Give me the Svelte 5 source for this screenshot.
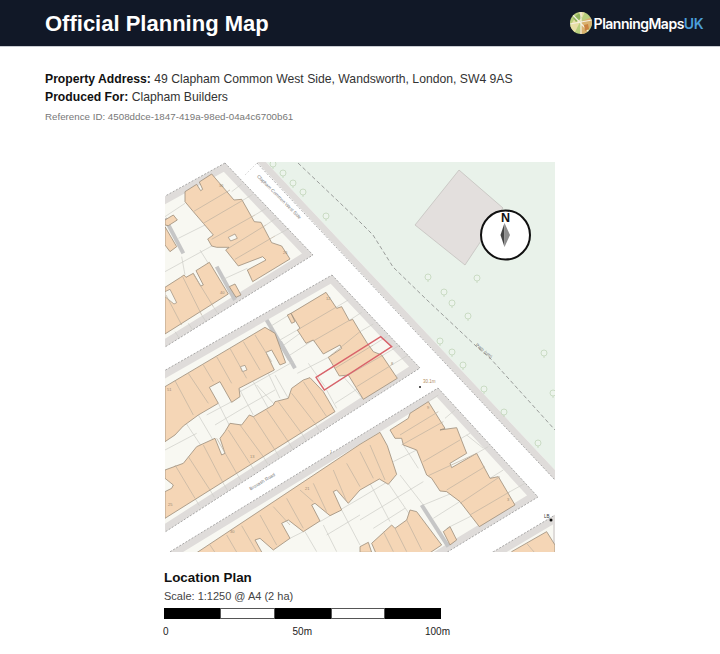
<script>
    // map pieces are traced per crop: each group has its own origin, coordinates at 3x
    const blocks = [
        '225,163 313,255 120,375 120,221',
        '332,275 420,368 120,561 120,396',
        '438,388 538,497 398,582 150,582 150,564',
        '493,552 560,512 560,560 480,560'
    ];

    const groups = [
        {
            x: 160, y: 160,
            alleys: ['15,175 70,280', '170,320 225,420', '320,480 390,600'],
            plots: [
                '215,95 245,72', '250,120 278,103', '285,165 318,145', '318,195 348,175', '345,228 388,205',
                '55,235 135,195', '15,170 75,130', '15,335 170,250', '65,290 75,345', '120,270 145,310',
                '185,360 262,325', '330,500 395,460', '365,560 420,520', '175,600 320,505',
                '125,465 138,485', '160,440 172,458', '85,490 98,510', '45,515 58,535'
            ],
            houses: [
                '75,95 110,73 122,92 128,88 118,66 155,42 222,120 245,118 283,185 303,187 335,248 365,258 390,297 278,365 262,330 318,300 308,290 235,318 197,270 207,262 170,262 155,258 143,237 160,225 130,190 100,155 75,125',
                '15,180 40,165 52,180 25,197 15,195',
                '15,200 50,260 30,275 15,255',
                '15,382 62,352 72,345 78,352 100,340 122,378 130,375 108,332 148,307 205,402 15,522',
                '208,380 225,372 243,405 228,412'
            ],
            holes: ['205,232 225,222 232,235 212,243', '15,395 30,388 50,428 42,432 15,410'],
            walls: [
                '100,155 210,90', '130,190 250,120', '155,238 285,165', '200,268 318,195', '225,298 345,228',
                '68,350 125,465', '100,342 160,440', '18,405 65,495'
            ]
        },
        {
            x: 280, y: 280,
            alleys: ['0,185 45,265'],
            plots: [
                '168,82 205,60', '210,120 245,97', '240,155 280,132', '280,195 320,170', '310,225 360,195',
                '335,255 385,225', '0,180 52,150', '30,225 100,180', '52,280 145,232', '108,292 205,232',
                '135,330 205,285', '165,370 235,325', '85,250 135,320', '140,330 170,385', '190,290 250,358'
            ],
            houses: [
                '33,100 138,37 170,85 185,80 208,122 218,118 240,155 262,190 280,215 305,225 352,295 250,358 205,285 178,288 145,232 185,205 180,195 130,222 100,180 78,190 52,150 60,145',
                '22,105 33,100 45,125 35,130'
            ],
            holes: [],
            walls: ['55,148 168,82', '100,183 210,120', '145,232 240,155', '165,265 280,195', '205,285 310,225', '230,320 335,255']
        },
        {
            x: 165, y: 340,
            alleys: [],
            plots: ['0,260 60,245', '60,245 110,320', '100,225 150,310', '125,225 200,185', '160,190 200,270', '222,145 265,225', '265,125 310,205', '310,100 345,175', '150,255 225,210', '225,210 330,150'],
            houses: [
                '0,140 300,-38 330,-20 362,68 345,75 320,30 303,37 328,90 222,145 225,170 200,187 165,125 133,142 160,190 100,225 55,258 30,285 0,305'
            ],
            holes: ['226,80 240,76 246,90 232,95'],
            walls: ['30,122 85,225', '70,100 130,190', '115,75 145,125', '155,50 200,130', '195,25 245,115', '235,5 285,90', '270,-15 320,65']
        },
        {
            x: 160, y: 355,
            alleys: [],
            plots: [
                '15,285 110,235', '240,110 400,20', '290,90 345,150', '345,60 385,130',
                '105,430 118,452', '150,405 163,427', '190,385 203,407', '230,355 243,377', '270,325 283,347',
                '310,305 323,327', '345,285 358,307', '385,260 398,282', '425,235 438,257', '465,205 478,227',
                '480,500 600,430', '500,540 600,480', '435,530 470,590', '490,510 530,590', '545,465 600,570', '390,550 430,530'
            ],
            houses: [
                '430,75 450,68 490,110 525,170 15,490 15,410 35,400 40,390 15,370 15,345 70,325 110,275 165,250 185,300 195,295 180,250 195,230 210,205 245,210 268,180 280,185 340,150 345,140 385,130 395,100',
                // runs on past this crop to the corner of the terrace
                '100,600 600,268 660,232 682,272 710,358 685,388 658,372 600,405 565,445 530,405 520,410 545,465 510,482 465,445 455,450 480,498 430,530 385,495 365,505 390,550 340,585 300,550 285,555 310,600'
            ],
            holes: [],
            walls: [
                '45,330 105,430', '85,305 150,405', '130,270 190,385', '170,250 230,355', '205,225 270,325',
                '240,210 310,305', '280,185 345,285', '320,165 385,260', '355,140 425,235', '395,115 465,205', '430,80 500,185',
                '150,570 170,600', '200,540 235,600', '245,512 290,590', '300,480 350,570', '340,455 390,510',
                '380,430 430,520', '420,405 460,440', '460,385 500,470', '520,345 560,440', '560,325 600,395'
            ]
        },
        {
            x: 360, y: 355,
            alleys: ['185,450 265,575'],
            plots: [
                '205,140 235,120', '255,190 285,165', '295,255 330,235', '320,240 370,280', '350,295 385,275',
                '390,370 430,345', '450,410 495,385', '0,430 100,370', '0,495 190,380', '40,520 135,460',
                '30,385 90,500', '85,385 150,480', '120,360 190,450', '190,450 275,415', '220,490 315,430', '260,520 340,480',
                '130,270 175,340', '100,320 170,285'
            ],
            houses: [
                '90,225 145,190 150,175 205,140 255,220 240,225 290,218 320,295 270,325 275,338 350,295 390,370 415,365 465,450 358,515 300,440 260,410 240,408 215,370 200,360 170,285 130,270 125,250 105,250',
                '35,565 95,510 105,520 140,495 150,465 170,470 245,570 200,600 50,600',
                '250,530 270,515 290,555 270,570',
                '0,575 25,562 35,592 0,592',
                '455,590 560,530 585,570 585,600 455,600'
            ],
            holes: [],
            walls: [
                '120,240 235,170', '125,270 250,200', '190,320 300,255', '205,362 350,295', '260,405 375,335', '300,445 420,365', '330,480 450,410',
                '70,530 100,590', '105,520 140,590', '140,495 185,585', '0,290 40,370', '30,270 75,375', '500,565 530,600'
            ]
        }
    ];

    const trees = [
        [273, 164], [283, 173], [293, 183], [303, 192], [326, 216],
        [428, 277], [477, 278], [444, 292], [452, 303], [468, 316], [440, 341], [452, 352], [544, 353],
        [463, 365], [484, 389], [504, 412], [538, 443], [553, 393]
    ];

    const numbers = [
        [219, 187, '36'], [283, 254, '26'], [220, 294, '40'], [167, 391, '51'], [168, 506, '25'], [250, 458, '13'],
        [326, 300, '12'], [391, 365, '8'], [427, 409, '9'], [507, 501, '3'], [305, 490, '21'], [230, 533, '30'], [330, 453, '1']
    ];

    const segments = [56, 55, 56, 54, 56];
</script>

<header>
    <h1>Official Planning Map</h1>
    <div class="logo">
        <svg width="22" height="22" viewBox="0 0 22 22">
            <defs><clipPath id="globe"><circle cx="11" cy="11" r="11" /></clipPath></defs>
            <g clip-path="url(#globe)">
                <rect width="22" height="22" fill="#b9cf7d" />
                <path d="M0 14 9 0h6L4 22H0z" fill="#e8dfa6" />
                <path d="M12 9l10-4v8l-7 9h-5z" fill="#d9b26f" />
                <path d="M3 6l6-5 3 5-6 4z" fill="#8fb35c" />
                <path d="M2 2l17 18M11 0v22M0 12l22-4" stroke="#f5efe0" stroke-width="1.2" fill="none" />
                <path d="M14 13l4-1 1 5-4 2z" fill="#c9823f" />
            </g>
        </svg>
        <span>PlanningMaps<em>UK</em></span>
    </div>
</header>

<main>
    <section class="details">
        <p><strong>Property Address:</strong> 49 Clapham Common West Side, Wandsworth, London, SW4 9AS</p>
        <p><strong>Produced For:</strong> Clapham Builders</p>
        <p class="ref">Reference ID: 4508ddce-1847-419a-98ed-04a4c6700b61</p>
    </section>

    <div class="plan">
        <svg class="map" width="390" height="390" viewBox="165 162 390 390">
            <defs>
                {#each blocks as points, i}
                    <clipPath id="block{i}"><polygon {points} /></clipPath>
                {/each}
            </defs>

            <polygon class="park" points="266,162 555,162 555,470" />
            <polygon class="band" points="257,162 266,162 555,470 555,480" />
            <polyline class="pavement-edge" points="257,163 555,480" />
            <polyline class="path" points="298,163 360,222 373,235 393,267 427,300 477,347 490,358 555,430" />
            <polyline class="pavement-edge faint" points="245,175 257,163" />

            {#each trees as [cx, cy]}
                <circle class="tree" {cx} {cy} r="3" />
                <line class="tree" x1={cx} y1={cy + 3} x2={cx} y2={cy + 5} />
            {/each}

            <polygon class="building" points="459,170 503,208 465,265 415,225" />

            {#each blocks as points, i}
                <polygon class="plot-ground" {points} clip-path="url(#block{i})" />
            {/each}

            {#each groups as g}
                <g transform="translate({g.x} {g.y}) scale(0.3333)">
                    {#each g.alleys as points}
                        <polyline class="alley" {points} />
                    {/each}
                    {#each g.plots as points}
                        <polyline class="plot" {points} />
                    {/each}
                </g>
            {/each}
            {#each groups as g}
                <g transform="translate({g.x} {g.y}) scale(0.3333)">
                    {#each g.houses as points}
                        <polygon class="house" {points} />
                    {/each}
                    {#each g.holes as points}
                        <polygon class="hole" {points} />
                    {/each}
                    {#each g.walls as points}
                        <polyline class="wall" {points} />
                    {/each}
                </g>
            {/each}

            {#each blocks as points}
                <polygon class="block-edge" {points} />
            {/each}

            <polygon class="red" points="316,377.3 380.7,336.7 391.7,346.7 324.3,390" />

            {#each numbers as [x, y, label]}
                <text class="num" {x} {y}>{label}</text>
            {/each}

            <text class="road" transform="translate(278 198) rotate(45)">Clapham Common West Side</text>
            <text class="road" transform="translate(263 483) rotate(-31)">Broxash Road</text>
            <text class="road" transform="translate(483 352) rotate(40)">Path (um)</text>
            <text class="level" x="423" y="383">30.1m</text>
            <circle cx="420" cy="387" r="1" fill="#222" />
            <text class="level dark" x="544" y="518">LB</text>
            <circle cx="551" cy="520" r="1.5" fill="#111" />

            <circle class="compass" cx="505.5" cy="235" r="24.5" />
            <text class="north" x="505.5" y="221.5">N</text>
            <polygon points="504.5,223 504.5,247 500.5,235" fill="#444" />
            <polygon points="504.5,223 504.5,247 510,235" fill="#8c8c8c" />
        </svg>

        <div class="caption">
            <h2>Location Plan</h2>
            <p class="scale">Scale: 1:1250 @ A4 (2 ha)</p>
            <div class="bar">
                {#each segments as w, i}
                    <div class:white={i % 2 === 1} style="width: {w}px"></div>
                {/each}
            </div>
            <div class="ticks">
                <span>0</span>
                <span class="mid">50m</span>
                <span class="end">100m</span>
            </div>
        </div>
    </div>
</main>

<style>
    :global(body) {
        font-family: "Liberation Sans", Arial, sans-serif;
        background: #fff;
    }

    header {
        height: 46px;
        background: #111827;
        border-bottom: 1px solid #c9ccd2;
        padding: 0 17px 0 45px;
        display: flex;
        align-items: center;
        justify-content: space-between;
    }

    h1 {
        margin: 2px 0 0;
        color: #fff;
        font-size: 22px;
        font-weight: 700;
    }

    .logo {
        display: flex;
        align-items: center;
        gap: 2px;
        color: #fff;
        font-family: Inter, sans-serif;
        font-size: 14px;
        font-weight: 600;
        letter-spacing: -0.5px;
    }

    .logo em {
        font-style: normal;
        color: #4b9fd9;
    }

    .details {
        padding: 24px 45px 0;
    }

    .details p {
        margin: 0 0 2px;
        font-size: 12.2px;
        line-height: 16px;
        color: #333;
    }

    .details strong {
        color: #111;
    }

    .details .ref {
        margin-top: 5px;
        font-size: 9.75px;
        line-height: 14px;
        color: #777;
    }

    .plan {
        width: 390px;
        margin: 38px auto 0;
    }

    .map {
        display: block;
    }

    .map * {
        vector-effect: non-scaling-stroke;
    }

    .park {
        fill: #e9f2ea;
    }

    .band {
        fill: #dfdcda;
    }

    .pavement-edge {
        fill: none;
        stroke: #8a8a8a;
        stroke-width: 0.7;
        stroke-dasharray: 2 1.6;
    }

    .faint {
        stroke: #ccc;
    }

    .path {
        fill: none;
        stroke: #777;
        stroke-width: 0.7;
        stroke-dasharray: 4 2.5;
    }

    .tree {
        fill: #ecf4ec;
        stroke: #c2d6ba;
        stroke-width: 0.8;
    }

    .building {
        fill: #e3dfdd;
        stroke: #b9b6b2;
        stroke-width: 0.6;
    }

    .plot-ground {
        fill: #f8f8f2;
        stroke: #dfdcda;
        stroke-width: 14;
    }

    .block-edge {
        fill: none;
        stroke: #8a8a8a;
        stroke-width: 0.7;
        stroke-dasharray: 2 1.6;
    }

    .alley {
        fill: none;
        stroke: #c6c6c6;
        stroke-width: 4;
    }

    .plot {
        fill: none;
        stroke: #cdcdc7;
        stroke-width: 0.7;
    }

    .house {
        fill: #f5d6b6;
        stroke: #9c8d7a;
        stroke-width: 0.8;
    }

    .hole {
        fill: #f8f8f2;
        stroke: #9c8d7a;
        stroke-width: 0.7;
    }

    .wall {
        fill: none;
        stroke: #bfb2a1;
        stroke-width: 0.7;
    }

    .red {
        fill: none;
        stroke: #d9626a;
        stroke-width: 1.4;
    }

    .num {
        font-size: 4px;
        fill: #9a8a72;
    }

    .road {
        font-size: 4.6px;
        fill: #777;
        text-anchor: middle;
    }

    .level {
        font-size: 4.5px;
        fill: #b08c60;
    }

    .dark {
        fill: #333;
    }

    .compass {
        fill: #fff;
        stroke: #111;
        stroke-width: 2;
    }

    .north {
        font-size: 12.5px;
        font-weight: 700;
        text-anchor: middle;
        fill: #111;
    }

    .caption {
        margin-left: -1px;
    }

    h2 {
        margin: 18px 0 0;
        font-size: 13.4px;
        line-height: 16px;
        color: #111;
    }

    .scale {
        margin: 3px 0 0;
        font-size: 11px;
        line-height: 14px;
        color: #444;
    }

    .bar {
        display: flex;
        width: 277px;
        height: 11px;
        margin-top: 5px;
    }

    .bar div {
        background: #000;
        border: 1px solid #000;
        box-sizing: border-box;
    }

    .bar .white {
        background: #fff;
        border-color: #555;
    }

    .ticks {
        display: flex;
        justify-content: space-between;
        width: 277px;
        margin: 6px 0 0 -1px;
        font-size: 10px;
        line-height: 13px;
        color: #222;
    }

    .mid {
        margin-left: 11px;
    }

    .end {
        margin-right: -10px;
    }
</style>
